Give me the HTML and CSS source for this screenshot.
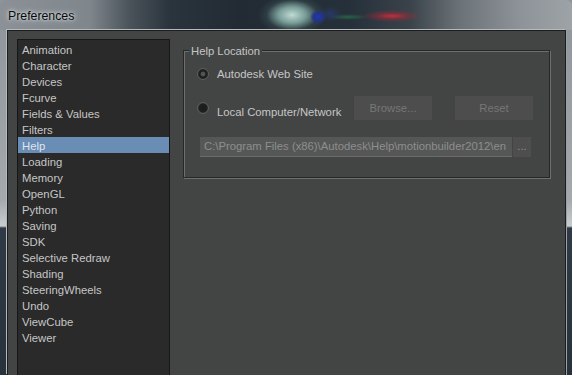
FILE: index.html
```html
<!DOCTYPE html>
<html>
<head>
<meta charset="utf-8">
<link rel="stylesheet" href="styles.css">
</head>
<body>
<div class="window">
  <div class="titlebar">
    <span class="title">Preferences</span>
  </div>
  <div class="client">
    <ul class="list">
      <li>Animation</li>
      <li>Character</li>
      <li>Devices</li>
      <li>Fcurve</li>
      <li>Fields &amp; Values</li>
      <li>Filters</li>
      <li class="selected">Help</li>
      <li>Loading</li>
      <li>Memory</li>
      <li>OpenGL</li>
      <li>Python</li>
      <li>Saving</li>
      <li>SDK</li>
      <li>Selective Redraw</li>
      <li>Shading</li>
      <li>SteeringWheels</li>
      <li>Undo</li>
      <li>ViewCube</li>
      <li>Viewer</li>
    </ul>
    <div class="panel">
      <div class="group">
        <span class="legend">Help Location</span>
        <div class="row row-web">
          <span class="radio checked"></span>
          <span class="label">Autodesk Web Site</span>
        </div>
        <div class="row row-local">
          <span class="radio"></span>
          <span class="label">Local Computer/Network</span>
          <span class="button browse">Browse...</span>
          <span class="button reset">Reset</span>
        </div>
        <div class="row row-path">
          <span class="field">C:\Program Files (x86)\Autodesk\Help\motionbuilder2012\en</span>
          <span class="dots">...</span>
        </div>
      </div>
    </div>
  </div>
</div>
</body>
</html>
```
FILE: styles.css
```css
html, body {
  margin: 0;
  padding: 0;
  width: 572px;
  height: 375px;
  overflow: hidden;
}
body {
  background: linear-gradient(to bottom, #8e959a 0, #a3a9ad 200px, #c9cdd0 226px, #2f3a46 228px, #28323d 375px);
  font-family: "Liberation Sans", Arial, sans-serif;
}
.window {
  height: 375px;
  display: flex;
  flex-direction: column;
}
.titlebar {
  height: 30px;
  flex: none;
  display: flex;
  align-items: center;
  padding-left: 8px;
  background:
    radial-gradient(ellipse 8px 7px at 318px 17px, #2637a6 0, #22338f 55%, rgba(34,51,143,0) 100%),
    radial-gradient(ellipse 12px 8px at 330px 14px, rgba(40,60,120,0.7) 0, rgba(40,60,120,0) 100%),
    radial-gradient(ellipse 34px 20px at 292px 15px, rgba(200,228,220,0.95) 0, rgba(150,195,185,0.75) 40%, rgba(70,100,100,0.3) 75%, rgba(60,80,80,0) 100%),
    radial-gradient(ellipse 30px 6px at 392px 16px, rgba(205,45,60,0.9) 0, rgba(160,40,55,0.5) 50%, rgba(120,40,50,0) 100%),
    radial-gradient(ellipse 20px 3px at 348px 17px, rgba(40,140,80,0.55) 0, rgba(40,140,80,0) 100%),
    linear-gradient(to right, #8b9196 0, #7f868c 90px, #4a535a 130px, #2a343c 170px, #222b33 240px, #26303a 350px, #3a434a 410px, #6c7378 460px, #8d9398 520px, #9ea3a7 572px);
  border-radius: 6px 6px 0 0;
}
.title {
  font-family: "Liberation Sans", Arial, sans-serif;
  font-size: 12.3px;
  color: #0a0a0a;
  text-shadow: 0 0 6px rgba(230,235,238,0.9), 0 0 3px rgba(230,235,238,0.9);
  margin-top: 2px;
}
.client {
  flex: 1;
  margin: 0 6px 0 7px;
  border: 1px solid #1c1d1d;
  border-bottom: none;
  box-shadow: -1px -1px 0 #b5babd, 1px 0 0 #9aa0a4;
  background: #434544;
  display: flex;
  align-items: flex-start;
  padding: 8px 0 0 9px;
  min-height: 0;
}
.list {
  list-style: none;
  margin: 0;
  padding: 1px 0 0 0;
  width: 151px;
  height: 340px;
  flex: none;
  background: #2a2a2a;
  border: 1px solid #171717;
  box-sizing: content-box;
}
.list li {
  box-sizing: border-box;
  height: 16px;
  line-height: 16px;
  padding: 1px 0 0 4px;
  font-size: 11.3px;
  color: #c6c6c6;
  white-space: nowrap;
}
.list li.selected {
  background: #6a8db5;
  color: #dfe6ee;
}
.panel {
  flex: 1;
  padding: 11px 15px 0 13px;
}
.group {
  position: relative;
  border: 1px solid #262727;
  box-shadow: 1px 1px 0 #6e706f, inset 1px 1px 0 #6e706f;
  padding: 13px 15px 0 13px;
  box-sizing: border-box;
  height: 128px;
}
.legend {
  position: absolute;
  top: -6px;
  left: 5px;
  padding: 0 2px;
  background: #434544;
  font-size: 11.3px;
  color: #c4c4c4;
  line-height: 13px;
}
.row {
  display: flex;
  align-items: center;
}
.row-web {
  height: 20px;
}
.row-local {
  margin-top: 12px;
  height: 24px;
}
.row-path {
  margin-top: 17px;
  height: 20px;
  padding-left: 3px;
}
.radio {
  width: 12px;
  height: 12px;
  border-radius: 50%;
  box-sizing: border-box;
  border: 1px solid #5c5e5d;
  background: radial-gradient(circle at 50% 50%, #1b1b1b 0, #1f1f1f 55%, #3a3b3b 75%, #232424 100%);
  flex: none;
  margin-right: 8px;
}
.radio.checked {
  background: radial-gradient(circle at 50% 50%, #5a5b5b 0, #4a4b4b 30%, #1d1d1d 40%, #222 65%, #3a3b3b 80%, #232424 100%);
}
.label {
  font-size: 11.3px;
  color: #c6c6c6;
  white-space: nowrap;
}
.row-local .label {
  margin-top: 8px;
  width: 137px;
}
.button {
  width: 78px;
  height: 24px;
  background: #4c4d4c;
  color: #767776;
  font-size: 11.3px;
  display: flex;
  align-items: center;
  justify-content: center;
  flex: none;
}
.reset {
  margin-left: 23px;
}
.field {
  width: 312px;
  height: 20px;
  box-sizing: border-box;
  background: #555756;
  border-bottom: 1px solid #6a6b6a;
  color: #8d8e8d;
  font-size: 11.3px;
  line-height: 19px;
  padding-left: 4px;
  white-space: nowrap;
  overflow: hidden;
  flex: none;
}
.dots {
  width: 18px;
  height: 20px;
  margin-left: 1px;
  background: #4d4e4d;
  color: #8d8e8d;
  font-size: 11.3px;
  line-height: 18px;
  text-align: center;
  flex: none;
}
```
